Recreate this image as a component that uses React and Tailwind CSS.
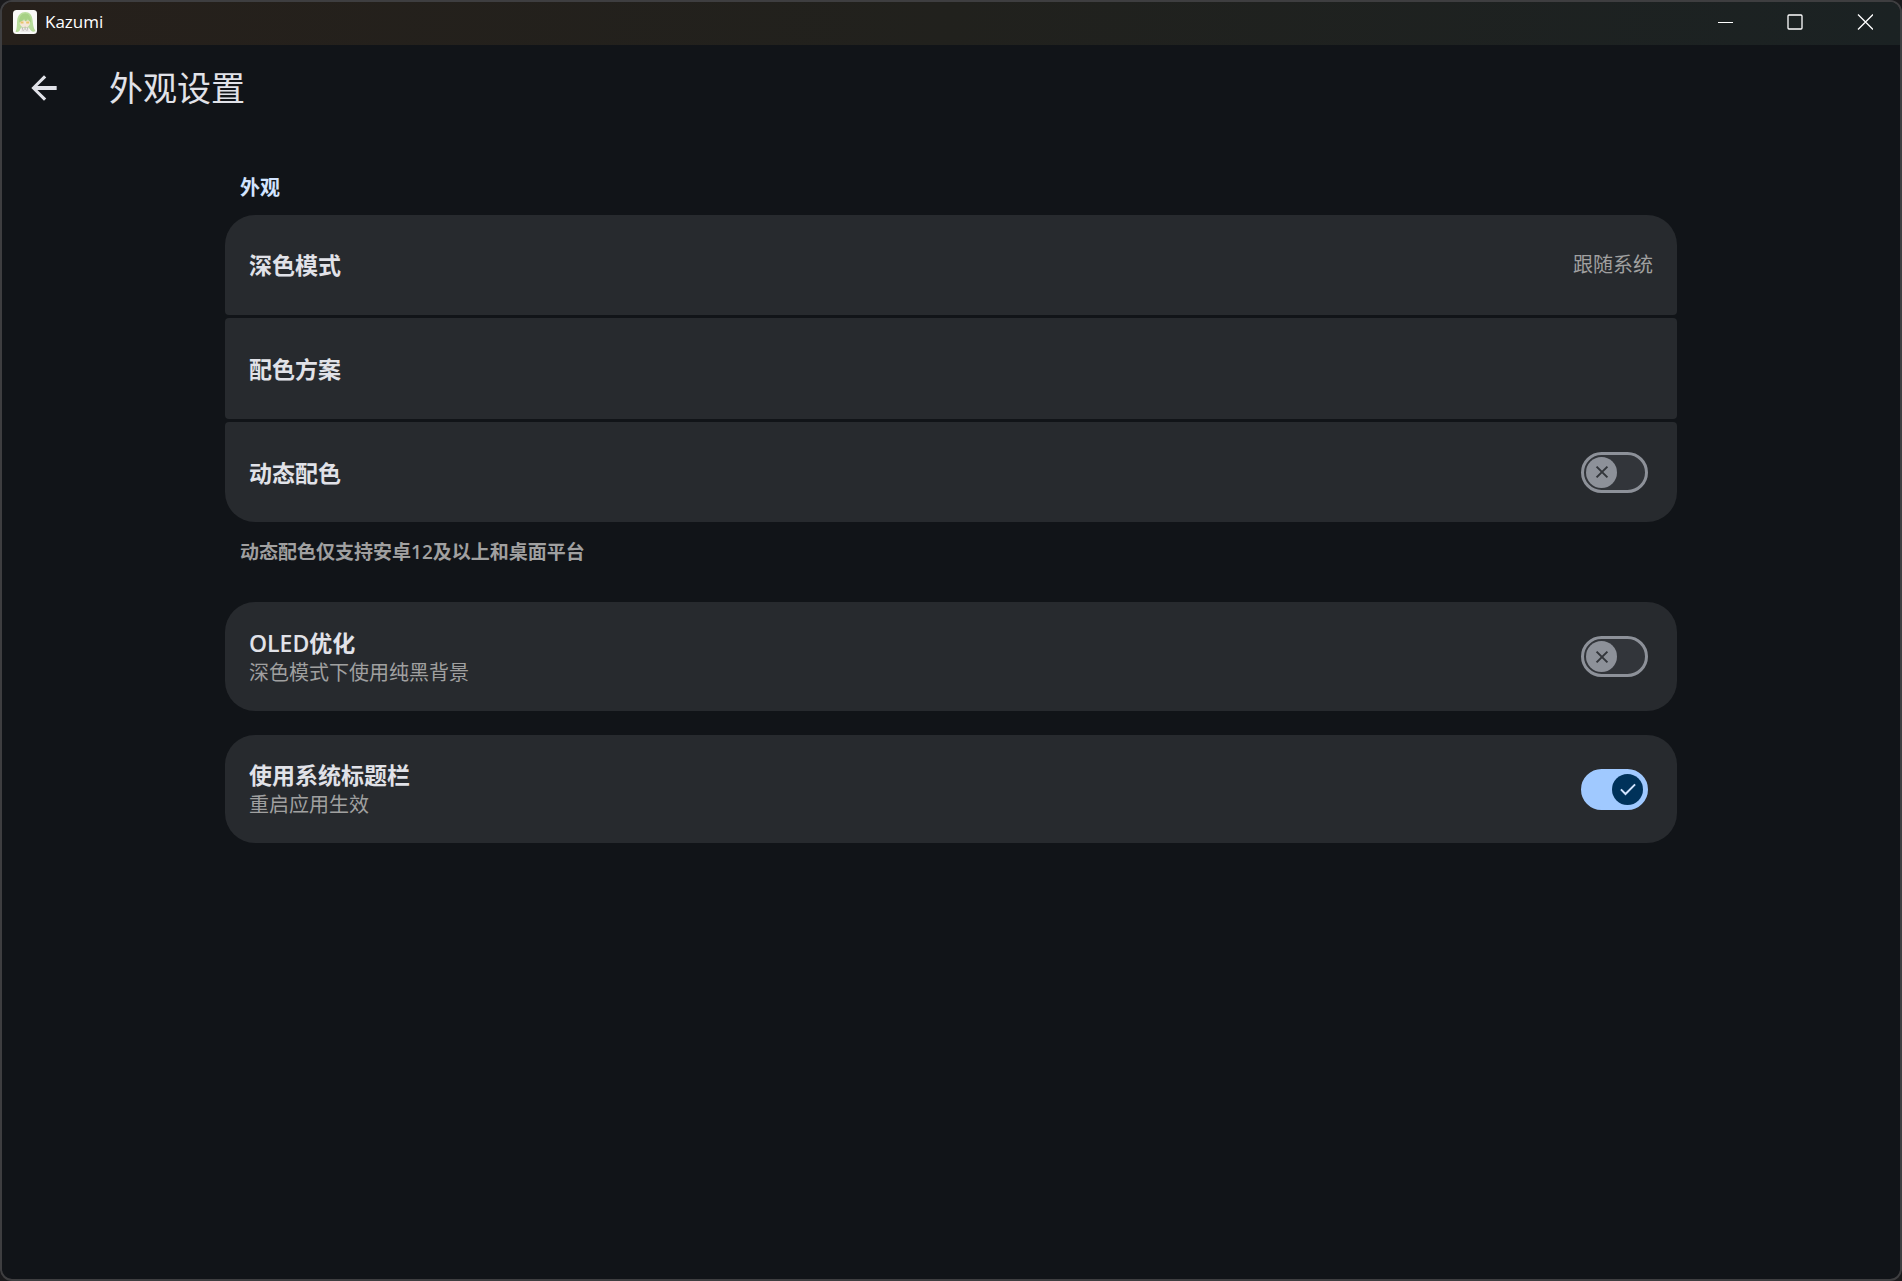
import React, { useState } from "react";

function AppIcon() {
  return (
    <svg viewBox="0 0 24 24" className="w-6 h-6" aria-hidden="true">
      <rect width="24" height="24" rx="3.5" fill="#f9f9f7" />
      {/* Hair */}
      <path
        d="M2.500 21.500C4.200 19 3.800 14 4.200 10C4.800 5 8 2 12.200 2C16.600 2 19 5 19.500 9.500C20 14 20.200 18 22.500 21C20.500 22.500 17.500 21.500 16.500 18.500H7.500C7 21.500 4.500 22.800 2.500 21.500Z"
        fill="#b9dd9c"
      />
      {/* Face */}
      <path d="M6.800 10.500H17V14C16 16.500 14 17.500 12 17.500C9.800 17.500 7.800 16.500 6.800 14Z" fill="#f3e6d8" />
      {/* Fringe */}
      <path
        d="M6 12.500C6.200 6.500 8.500 3.600 12.200 3.600C16 3.600 17.800 6.500 18 12.500C16.500 11.500 15.500 10.200 14.800 8.500C14.300 9.800 13.500 10.800 12.500 11.500C12 10.500 11.500 9.500 11.200 8.500C10.200 10.300 8.500 11.800 6 12.500Z"
        fill="#a6d184"
      />
      <rect x="7.500" y="11.500" width="3" height="2" fill="#e9c46a" />
      <rect x="13.200" y="11.500" width="3" height="2" fill="#e9c46a" />
      {/* Collar */}
      <path d="M7.500 22L8.500 17L12 18.500L15.500 17L17 22Z" fill="#eeebe9" />
      <path d="M9 17L10.300 21M15 17L13.800 21M12.100 16.500V20" stroke="#b5aeac" strokeWidth="0.8" />
    </svg>
  );
}

function TitleBar() {
  return (
    <header className="flex items-center h-[43px] pl-[11px] pb-[3px] bg-linear-to-r from-[#26201b] via-[#21211d] to-[#1b2223]">
      <AppIcon />
      <span className="ml-2 text-[17px] leading-6 text-white font-['Open_Sans',sans-serif]">Kazumi</span>
      <div className="ml-auto flex h-full">
        <button aria-label="Minimize" className="w-[70px] flex items-center justify-center">
          <svg viewBox="0 0 16 16" className="w-4 h-4">
            <path d="M1 8.500H16" stroke="#fff" />
          </svg>
        </button>
        <button aria-label="Maximize" className="w-[70px] flex items-center justify-center">
          <svg viewBox="0 0 16 16" className="w-4 h-4" fill="none">
            <rect x="1" y="1" width="14" height="14" rx="1" stroke="#fff" strokeWidth="1.300" />
          </svg>
        </button>
        <button aria-label="Close" className="w-[70px] flex items-center justify-center">
          <svg viewBox="0 0 16 16" className="w-4 h-4">
            <path d="M1 0.500L16 15.500M16 0.500L1 15.500" stroke="#fff" strokeWidth="1.300" />
          </svg>
        </button>
      </div>
    </header>
  );
}

function Switch({ id, checked, onChange }) {
  return (
    <span className="relative mr-[5px] shrink-0 w-[67px] h-[41px]">
      <input
        id={id}
        type="checkbox"
        role="switch"
        checked={checked}
        onChange={(e) => onChange(e.target.checked)}
        className="peer appearance-none block w-full h-full rounded-full border-3 border-[#8d9199] bg-[#32353a] checked:border-[#a0c9ff] checked:bg-[#a0c9ff]"
      />
      {/* Thumb */}
      <span className="pointer-events-none absolute top-[5px] left-[5px] w-[31px] h-[31px] rounded-full bg-[#8d9199] flex items-center justify-center peer-checked:left-[31px] peer-checked:bg-[#00325a]">
        <svg viewBox="0 0 24 24" className="w-5 h-5" fill="none" strokeWidth="2.400">
          {checked ? (
            <path d="M3.500 12.500L9 18L20.500 6.500" stroke="#d2e4ff" />
          ) : (
            <path d="M5.500 5.500L18.500 18.500M18.500 5.500L5.500 18.500" stroke="#32353a" />
          )}
        </svg>
      </span>
    </span>
  );
}

function SwitchRow({ id, title, subtitle, checked, onChange, className }) {
  return (
    <div className={`flex items-center justify-between px-6 bg-[#272a2e] ${className}`}>
      <label htmlFor={id} className="flex flex-col pt-0.5">
        <span className="text-[23px] leading-[30px] font-bold">{title}</span>
        {subtitle && (
          <span className="text-xl leading-[30px] text-[#a0a0a0]">{subtitle}</span>
        )}
      </label>
      <Switch id={id} checked={checked} onChange={onChange} />
    </div>
  );
}

export default function App() {
  const [dynamicColor, setDynamicColor] = useState(false);
  const [oled, setOled] = useState(false);
  const [systemTitleBar, setSystemTitleBar] = useState(true);

  return (
    <div className="min-h-screen bg-[#1a1a1c] flex">
      <div className="flex-1 rounded-xl border-2 border-[#3e3e40] bg-[#111418] text-[#e1e2e8] overflow-hidden font-['Open_Sans','Noto_Sans_CJK_SC',sans-serif]">
        <TitleBar />

        <div className="flex items-center h-[85px] pl-[22px]">
          <button aria-label="返回" className="w-10 h-10 flex items-center justify-center">
            <svg viewBox="0 0 24 24" className="w-[38px] h-[38px]" fill="#e1e2e8">
              <path d="M20 10.800H7.830L13.420 5.410L12 4L4 12L12 20L13.410 18.590L7.830 13.200H20V10.800Z" />
            </svg>
          </button>
          <h1 className="ml-[45px] text-[34px] leading-10">外观设置</h1>
        </div>

        <main className="mx-auto w-full max-w-[1452px] pt-11">
          <h2 className="pl-[15px] text-xl leading-7 font-bold text-[#d2e4ff]">外观</h2>

          <section className="mt-[13px] flex flex-col gap-[3px]">
            <button className="h-[100px] px-6 flex items-center justify-between bg-[#272a2e] rounded-t-[30px] rounded-b-[4px]">
              <span className="text-[23px] leading-[30px] font-bold">深色模式</span>
              <span className="text-xl leading-7 text-[#a0a0a0]">跟随系统</span>
            </button>
            <button className="h-[101px] px-6 flex items-center bg-[#272a2e] rounded-[4px]">
              <span className="text-[23px] leading-[30px] font-bold">配色方案</span>
            </button>
            <SwitchRow
              id="dynamic-color"
              title="动态配色"
              checked={dynamicColor}
              onChange={setDynamicColor}
              className="h-[100px] rounded-t-[4px] rounded-b-[30px]"
            />
          </section>
          <p className="mt-4 pl-[15px] text-[19px] leading-7 font-bold text-[#a0a0a0]">
            动态配色仅支持安卓<span className="font-semibold">12</span>及以上和桌面平台
          </p>

          <section className="mt-9 flex flex-col gap-6">
            <SwitchRow
              id="oled"
              title={<><span className="font-semibold">OLED</span>优化</>}
              subtitle="深色模式下使用纯黑背景"
              checked={oled}
              onChange={setOled}
              className="h-[109px] rounded-[30px]"
            />
            <SwitchRow
              id="system-title-bar"
              title="使用系统标题栏"
              subtitle="重启应用生效"
              checked={systemTitleBar}
              onChange={setSystemTitleBar}
              className="h-[108px] rounded-[30px]"
            />
          </section>
        </main>
      </div>
    </div>
  );
}
